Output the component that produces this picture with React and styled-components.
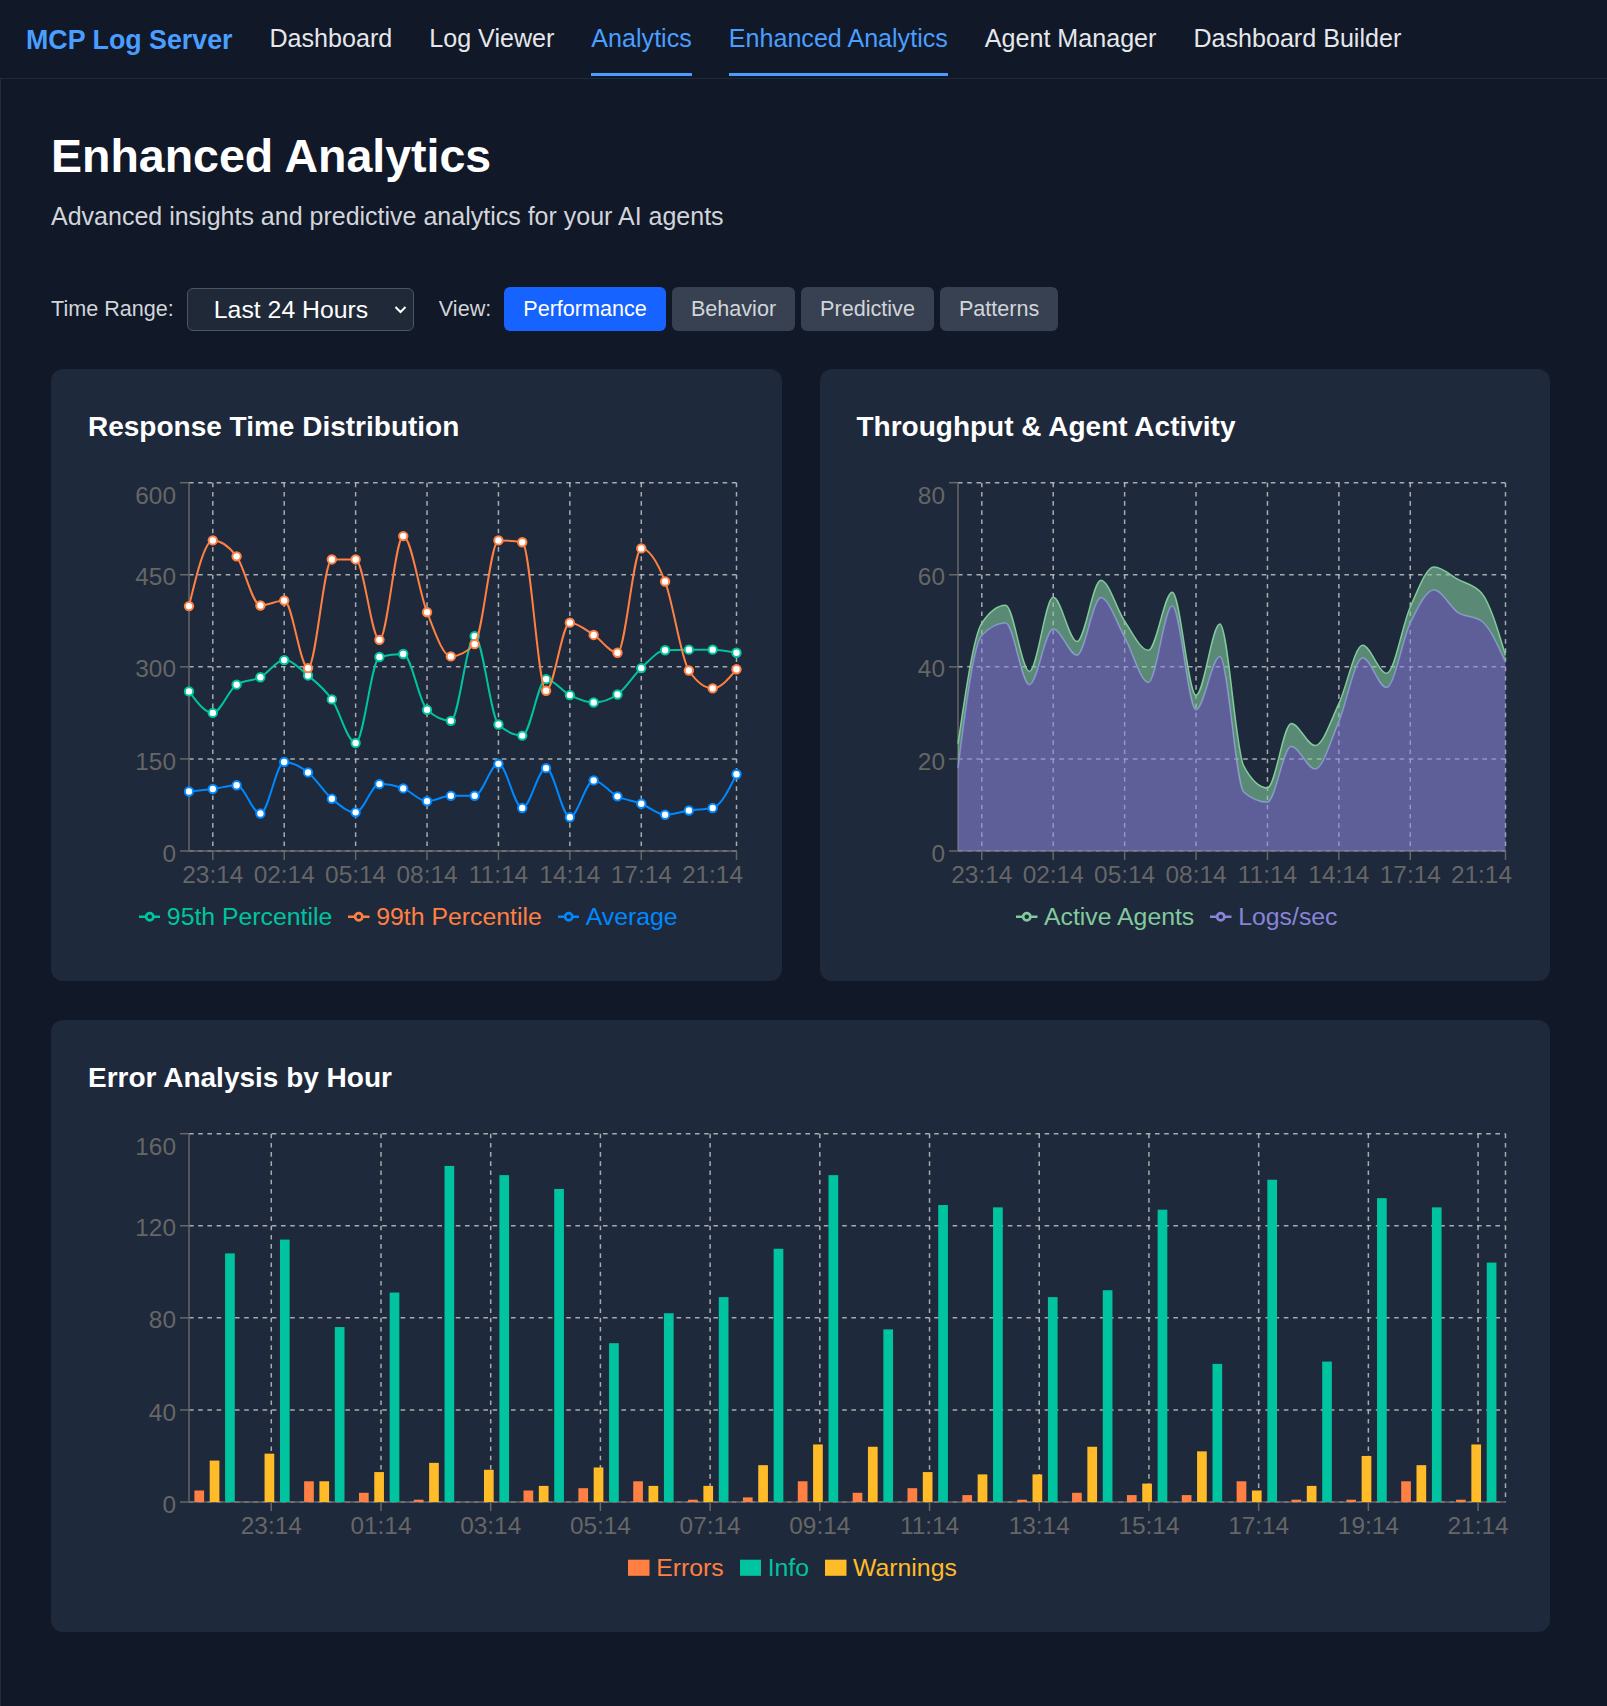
import React from 'react';
import styled, { createGlobalStyle } from 'styled-components';

const GlobalStyle = createGlobalStyle`
  * { box-sizing: border-box; }
  body {
    margin: 0;
    background: #111827;
    font-family: 'Liberation Sans', Arial, sans-serif;
  }
`;

const HOURS = Array.from({ length: 24 }, (_, i) => `${String((22 + i) % 24).padStart(2, '0')}:14`);

const responseTimes = {
  p95: [260, 225, 271, 283, 311, 286, 247, 176, 316, 321, 230, 212, 350, 206, 188, 280, 254, 242, 255, 298, 327, 328, 328, 323],
  p99: [399, 506, 480, 400, 408, 298, 475, 475, 344, 513, 389, 317, 337, 506, 503, 261, 372, 352, 323, 493, 439, 294, 265, 296],
  avg: [97, 101, 107, 61, 145, 128, 85, 63, 109, 102, 81, 90, 90, 142, 70, 135, 55, 115, 89, 77, 59, 66, 70, 125],
};

const logsPerSec = [18, 46.8, 49.5, 36.1, 48.2, 42.5, 55, 46.4, 36.6, 53.2, 30.7, 42.2, 12.8, 10.6, 22.7, 17.8, 28.1, 41.9, 35.5, 49.5, 56.7, 51.8, 49.9, 41];
const stackedTop = [23.3, 49.5, 53.4, 39, 55.1, 45.5, 58.8, 49.9, 43.6, 56.2, 33.8, 49.3, 18.5, 13.7, 27.7, 22.9, 32, 44.7, 38.6, 53, 61.7, 59, 56, 42.5];

const errors = [5, 0, 9, 4, 1, 0, 5, 6, 9, 1, 2, 9, 4, 6, 3, 1, 4, 3, 3, 9, 1, 1, 9, 1];
const warnings = [18, 21, 9, 13, 17, 14, 7, 15, 7, 7, 16, 25, 24, 13, 12, 12, 24, 8, 22, 5, 7, 20, 16, 25];
const info = [108, 114, 76, 91, 146, 142, 136, 69, 82, 89, 110, 142, 75, 129, 128, 89, 92, 127, 60, 140, 61, 132, 128, 104];

const COLORS = {
  green: '#00C49F',
  orange: '#FF8042',
  blue: '#0088FE',
  yellow: '#FFBB28',
  agents: '#82ca9d',
  logs: '#8884d8',
};

const GRID = { stroke: '#ccc', strokeDasharray: '4.6 4.6', strokeWidth: 1.5, strokeOpacity: 0.8 };

const r2 = (n) => Math.round(n * 100) / 100;

// monotone-x cubic segments, same maths as d3's curveMonotoneX
function curveSegments(pts) {
  const n = pts.length;
  const t = new Array(n).fill(0);
  const slope3 = (p0, p1, p2) => {
    const h0 = p1[0] - p0[0];
    const h1 = p2[0] - p1[0];
    const s0 = (p1[1] - p0[1]) / h0;
    const s1 = (p2[1] - p1[1]) / h1;
    const p = (s0 * h1 + s1 * h0) / (h0 + h1);
    return (Math.sign(s0) + Math.sign(s1)) * Math.min(Math.abs(s0), Math.abs(s1), 0.5 * Math.abs(p)) || 0;
  };
  const slope2 = (p0, p1, tt) => (3 * (p1[1] - p0[1]) / (p1[0] - p0[0]) - tt) / 2;
  for (let i = 1; i < n - 1; i++) t[i] = slope3(pts[i - 1], pts[i], pts[i + 1]);
  t[0] = slope2(pts[0], pts[1], t[1]);
  t[n - 1] = slope2(pts[n - 2], pts[n - 1], t[n - 2]);
  let d = '';
  for (let i = 0; i < n - 1; i++) {
    const [x0, y0] = pts[i];
    const [x1, y1] = pts[i + 1];
    const dx = (x1 - x0) / 3;
    d += `C${r2(x0 + dx)},${r2(y0 + dx * t[i])},${r2(x1 - dx)},${r2(y1 - dx * t[i + 1])},${r2(x1)},${r2(y1)}`;
  }
  return d;
}

const curvePath = (pts) => `M${r2(pts[0][0])},${r2(pts[0][1])}` + curveSegments(pts);

/* ---------- layout ---------- */

const Page = styled.div`
  min-height: 100vh;
  background: #111827;
`;

const Nav = styled.nav`
  display: flex;
  align-items: flex-start;
  gap: 37px;
  height: 79px;
  padding: 0 26px;
  border-bottom: 1px solid #1f2937;
`;

const Brand = styled.a`
  display: flex;
  align-items: center;
  height: 76px;
  padding-top: 4px;
  font-size: 26.8px;
  font-weight: 700;
  color: #4a9eff;
  text-decoration: none;
`;

const NavLink = styled.a`
  display: flex;
  align-items: center;
  height: 76px;
  padding-top: 4px;
  font-size: 25.1px;
  color: ${(p) => (p.$active ? '#4a9eff' : '#e5e7eb')};
  border-bottom: 3px solid ${(p) => (p.$active ? '#4a9eff' : 'transparent')};
  text-decoration: none;
`;

const Main = styled.main`
  padding: 49px 57px 76px 50px;
  border-left: 1px solid #222b3a;
`;

const Title = styled.h1`
  margin: 0;
  font-size: 46.5px;
  line-height: 56px;
  font-weight: 700;
  color: #fff;
`;

const Subtitle = styled.p`
  margin: 14px 0 0;
  font-size: 25px;
  line-height: 37px;
  color: #d1d5db;
`;

const Controls = styled.div`
  display: flex;
  align-items: center;
  gap: 13px;
  margin-top: 52px;
  height: 44px;
`;

const Label = styled.span`
  font-size: 21.6px;
  color: #d1d5db;
  margin-left: ${(p) => p.$gap || 0}px;
`;

const SelectWrap = styled.div`
  position: relative;
  width: 227px;
  height: 43px;
`;

const Select = styled.select`
  appearance: none;
  width: 100%;
  height: 100%;
  padding: 0 0 0 26px;
  background: #1f2937;
  color: #fff;
  border: 1px solid #4b5563;
  border-radius: 6px;
  font-family: inherit;
  font-size: 24.8px;
`;

const Chevron = styled.svg`
  position: absolute;
  right: 7px;
  top: 15px;
  pointer-events: none;
`;

const ButtonGroup = styled.div`
  display: flex;
  gap: 6px;
`;

const ViewButton = styled.button`
  height: 44px;
  padding: 0 19px;
  border: none;
  border-radius: 6px;
  font-family: inherit;
  font-size: 21.6px;
  background: ${(p) => (p.$active ? '#1763ff' : '#374151')};
  color: ${(p) => (p.$active ? '#fff' : '#d1d5db')};
`;

const CardGrid = styled.div`
  display: grid;
  grid-template-columns: 1fr 1fr;
  gap: 39px 38px;
  margin-top: 38px;
`;

const Card = styled.section`
  grid-column: ${(p) => (p.$wide ? '1 / -1' : 'auto')};
  padding: 37px;
  background: #1e293b;
  border-radius: 12px;
`;

const CardTitle = styled.h3`
  margin: 0 0 27.5px;
  font-size: 28px;
  line-height: 41.5px;
  font-weight: 700;
  color: #fff;
`;

const ChartSvg = styled.svg`
  display: block;
  overflow: visible;
  font-family: 'Liberation Sans', Arial, sans-serif;

  text {
    font-size: 24.4px;
    fill: #666;
  }
`;

const Legend = styled.ul`
  display: flex;
  justify-content: center;
  align-items: center;
  gap: 16px;
  height: 54px;
  margin: 0;
  padding: 0 16px 0 0;
  list-style: none;
`;

const LegendItem = styled.li`
  display: flex;
  align-items: center;
  gap: 6.5px;
  font-size: 24.8px;
  color: ${(p) => p.$color};
`;

/* ---------- chart parts ---------- */

const third = 32 / 3;
const sixth = 32 / 6;
const LINE_ICON = `M0,16h${third}A${sixth},${sixth},0,1,1,${2 * third},16H32M${2 * third},16A${sixth},${sixth},0,1,1,${third},16`;

function LegendIcon({ color, type }) {
  return (
    <svg width="21.5" height="21.5" viewBox="0 0 32 32">
      {type === 'rect' ? (
        <path d="M0,4h32v24h-32z" fill={color} />
      ) : (
        <path d={LINE_ICON} fill="none" stroke={color} strokeWidth="4" />
      )}
    </svg>
  );
}

function ChartLegend({ items, type }) {
  return (
    <Legend>
      {items.map((it) => (
        <LegendItem key={it.label} $color={it.color}>
          <LegendIcon color={it.color} type={type} />
          {it.label}
        </LegendItem>
      ))}
    </Legend>
  );
}

function Frame({ W, L, R, T, B, yTicks, yMax, xTicks, extraV = [] }) {
  const yOf = (v) => B - (v / yMax) * (B - T);
  return (
    <g>
      {yTicks.map((v) => (
        <line key={`h${v}`} x1={L} x2={R} y1={yOf(v)} y2={yOf(v)} {...GRID} />
      ))}
      {[...xTicks.map((t) => t.x), ...extraV].map((x, i) => (
        <line key={`v${i}`} x1={x} x2={x} y1={T} y2={B} {...GRID} />
      ))}
      <line x1={L} x2={L} y1={T} y2={B} stroke="#666" strokeWidth="1.5" />
      <line x1={L} x2={R} y1={B} y2={B} stroke="#666" strokeWidth="1.5" />
      {yTicks.map((v) => (
        <g key={`yt${v}`}>
          <line x1={L - 9} x2={L} y1={yOf(v)} y2={yOf(v)} stroke="#666" strokeWidth="1.5" />
          <text x={L - 13} y={yOf(v) + (v === yMax ? 21 : 10.6)} textAnchor="end">
            {v}
          </text>
        </g>
      ))}
      {xTicks.map((t) => {
        const atEdge = t.x + 32 > W;
        return (
          <g key={`xt${t.label}`}>
            <line x1={t.x} x2={t.x} y1={B} y2={B + 9} stroke="#666" strokeWidth="1.5" />
            <text x={atEdge ? W - 1 : t.x} y={B + 32} textAnchor={atEdge ? 'end' : 'middle'}>
              {t.label}
            </text>
          </g>
        );
      })}
    </g>
  );
}

const PLOT = { L: 101, T: 7.7, B: 376, H: 415 };

function ResponseTimeChart({ W }) {
  const { L, T, B, H } = PLOT;
  const R = W - 7.5;
  const step = (R - L) / 23;
  const xOf = (i) => L + i * step;
  const yOf = (v) => B - (v / 600) * (B - T);
  const xTicks = [1, 4, 7, 10, 13, 16, 19, 23].map((i) => ({ x: xOf(i), label: HOURS[i] }));
  const series = [
    { key: 'p95', color: COLORS.green },
    { key: 'p99', color: COLORS.orange },
    { key: 'avg', color: COLORS.blue },
  ];
  return (
    <ChartSvg width={W} height={H}>
      <Frame W={W} L={L} R={R} T={T} B={B} yMax={600} yTicks={[0, 150, 300, 450, 600]} xTicks={xTicks} />
      {series.map((s) => {
        const pts = responseTimes[s.key].map((v, i) => [xOf(i), yOf(v)]);
        return (
          <g key={s.key}>
            <path d={curvePath(pts)} fill="none" stroke={s.color} strokeWidth="2" />
            {pts.map(([x, y], i) => (
              <circle key={i} cx={x} cy={y} r="4.2" fill="#fff" stroke={s.color} strokeWidth="2" />
            ))}
          </g>
        );
      })}
    </ChartSvg>
  );
}

function ThroughputChart({ W }) {
  const { L, T, B, H } = PLOT;
  const R = W - 7.5;
  const step = (R - L) / 23;
  const xOf = (i) => L + i * step;
  const yOf = (v) => B - (v / 80) * (B - T);
  const xTicks = [1, 4, 7, 10, 13, 16, 19, 23].map((i) => ({ x: xOf(i), label: HOURS[i] }));
  const logPts = logsPerSec.map((v, i) => [xOf(i), yOf(v)]);
  const topPts = stackedTop.map((v, i) => [xOf(i), yOf(v)]);
  const last = logPts[logPts.length - 1];
  const logArea = `${curvePath(logPts)}L${r2(R)},${B}L${L},${B}Z`;
  const band = `${curvePath(topPts)}L${r2(last[0])},${r2(last[1])}${curveSegments([...logPts].reverse())}Z`;
  return (
    <ChartSvg width={W} height={H}>
      <Frame W={W} L={L} R={R} T={T} B={B} yMax={80} yTicks={[0, 20, 40, 60, 80]} xTicks={xTicks} />
      <path d={logArea} fill={COLORS.logs} fillOpacity="0.6" />
      <path d={curvePath(logPts)} fill="none" stroke={COLORS.logs} strokeWidth="1.5" />
      <path d={band} fill={COLORS.agents} fillOpacity="0.6" />
      <path d={curvePath(topPts)} fill="none" stroke={COLORS.agents} strokeWidth="1.5" />
    </ChartSvg>
  );
}

function ErrorChart({ W }) {
  const { L, T, B, H } = PLOT;
  const R = W - 7.5;
  const band = (R - L) / 24;
  const yOf = (v) => B - (v / 160) * (B - T);
  const xTicks = HOURS.map((h, i) => ({ x: L + (i + 0.5) * band, label: h })).filter((_, i) => i % 2 === 1);
  const bars = [
    { data: errors, color: COLORS.orange, off: 5.4 },
    { data: warnings, color: COLORS.yellow, off: 20.7 },
    { data: info, color: COLORS.green, off: 36.1 },
  ];
  return (
    <ChartSvg width={W} height={H}>
      <Frame W={W} L={L} R={R} T={T} B={B} yMax={160} yTicks={[0, 40, 80, 120, 160]} xTicks={xTicks} extraV={[R]} />
      {bars.map((b) =>
        b.data.map((v, i) =>
          v > 0 ? (
            <rect key={`${b.color}${i}`} x={L + i * band + b.off} y={yOf(v)} width="9.7" height={B - yOf(v)} fill={b.color} />
          ) : null
        )
      )}
    </ChartSvg>
  );
}

export default function App() {
  const tabs = ['Dashboard', 'Log Viewer', 'Analytics', 'Enhanced Analytics', 'Agent Manager', 'Dashboard Builder'];
  const active = ['Analytics', 'Enhanced Analytics'];
  const views = ['Performance', 'Behavior', 'Predictive', 'Patterns'];

  return (
    <Page>
      <GlobalStyle />
      <Nav>
        <Brand href="#">MCP Log Server</Brand>
        {tabs.map((t) => (
          <NavLink key={t} href="#" $active={active.includes(t)}>
            {t}
          </NavLink>
        ))}
      </Nav>

      <Main>
        <Title>Enhanced Analytics</Title>
        <Subtitle>Advanced insights and predictive analytics for your AI agents</Subtitle>

        <Controls>
          <Label>Time Range:</Label>
          <SelectWrap>
            <Select defaultValue="24h">
              <option value="1h">Last Hour</option>
              <option value="24h">Last 24 Hours</option>
              <option value="7d">Last 7 Days</option>
            </Select>
            <Chevron width="13" height="13" viewBox="0 0 13 13">
              <polyline points="1.5,4 6.5,9 11.5,4" fill="none" stroke="#fff" strokeWidth="2" />
            </Chevron>
          </SelectWrap>
          <Label $gap={12}>View:</Label>
          <ButtonGroup>
            {views.map((v) => (
              <ViewButton key={v} $active={v === 'Performance'}>
                {v}
              </ViewButton>
            ))}
          </ButtonGroup>
        </Controls>

        <CardGrid>
          <Card>
            <CardTitle>Response Time Distribution</CardTitle>
            <ResponseTimeChart W={656} />
            <ChartLegend
              items={[
                { label: '95th Percentile', color: COLORS.green },
                { label: '99th Percentile', color: COLORS.orange },
                { label: 'Average', color: COLORS.blue },
              ]}
            />
          </Card>
          <Card>
            <CardTitle>Throughput &amp; Agent Activity</CardTitle>
            <ThroughputChart W={656} />
            <ChartLegend
              items={[
                { label: 'Active Agents', color: COLORS.agents },
                { label: 'Logs/sec', color: COLORS.logs },
              ]}
            />
          </Card>
          <Card $wide>
            <CardTitle>Error Analysis by Hour</CardTitle>
            <ErrorChart W={1425} />
            <ChartLegend
              type="rect"
              items={[
                { label: 'Errors', color: COLORS.orange },
                { label: 'Info', color: COLORS.green },
                { label: 'Warnings', color: COLORS.yellow },
              ]}
            />
          </Card>
        </CardGrid>
      </Main>
    </Page>
  );
}
